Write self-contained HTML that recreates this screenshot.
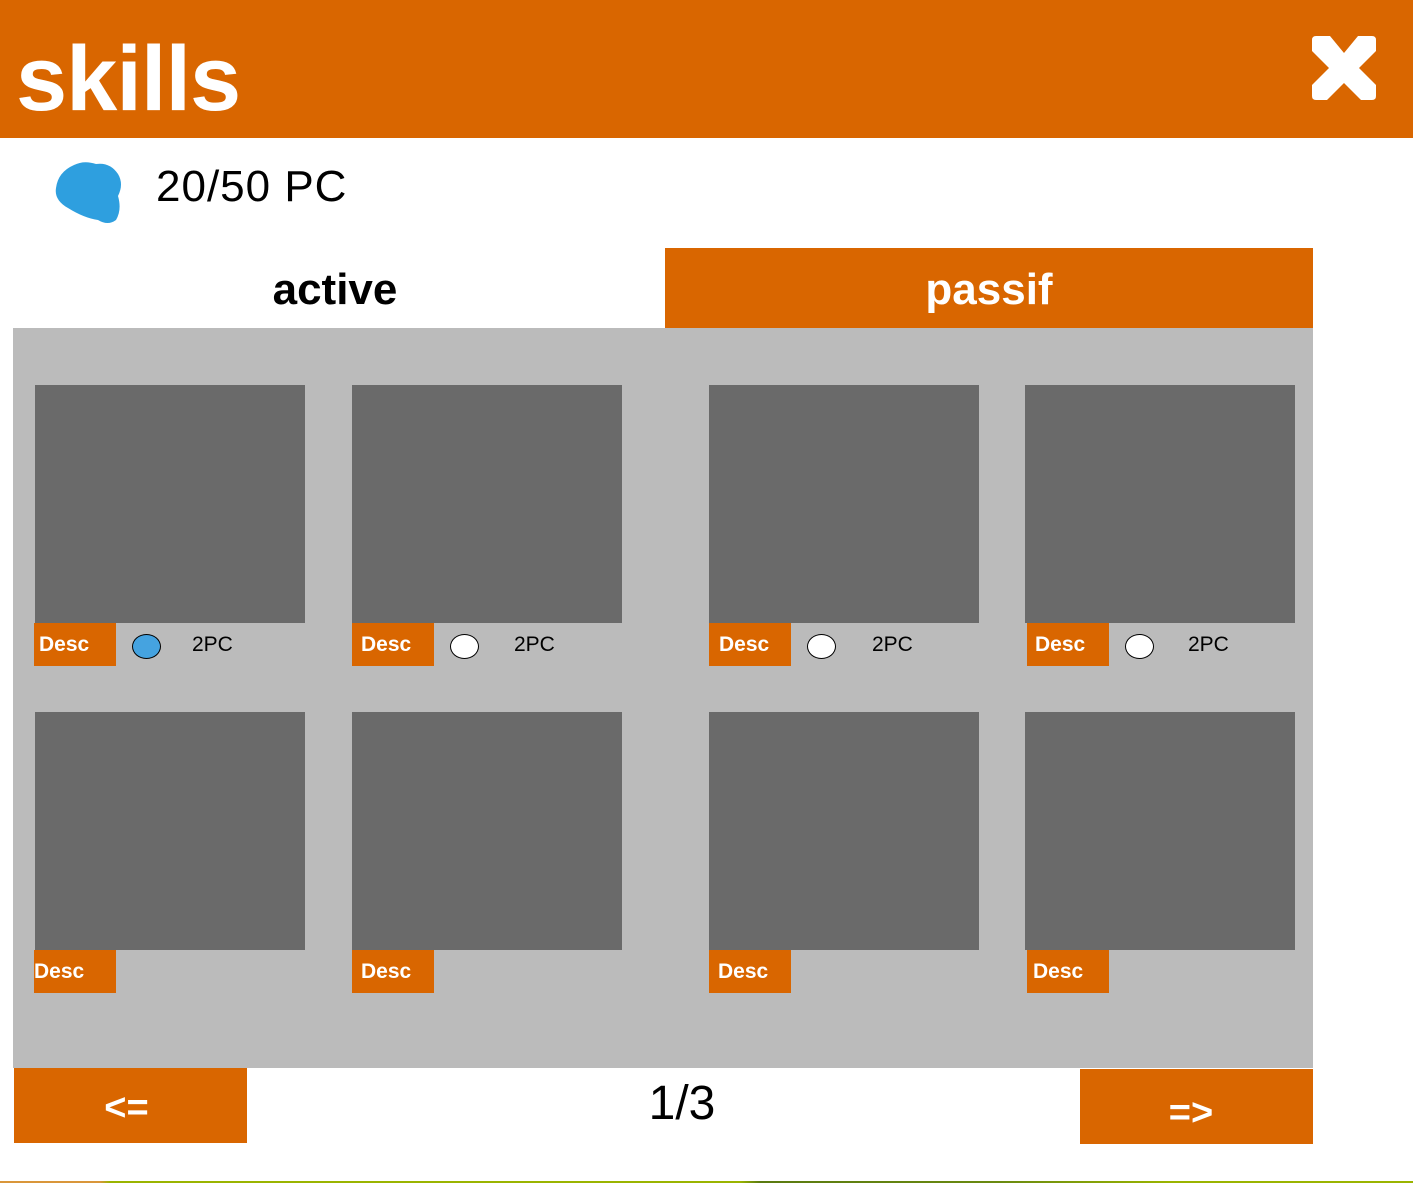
<!DOCTYPE html>
<html><head><style>
*{margin:0;padding:0;box-sizing:border-box}
body{width:1413px;height:1183px;position:relative;background:#fff;font-family:"Liberation Sans",sans-serif;overflow:hidden}
.a{position:absolute}
.o{background:#D96600}
.card{position:absolute;background:#6a6a6a;width:270px;height:238px}
.desc{position:absolute;background:#D96600;width:82px;height:43px;color:#fff;font-weight:bold;font-size:21px;line-height:43px;padding-left:5px}
.rad{position:absolute;width:29px;height:25px;border:1.5px solid #000;border-radius:50%;background:#fff}
.pc{position:absolute;font-size:21px;color:#000;line-height:24px}
</style></head><body>
<div class="a o" style="left:0;top:0;width:1413px;height:138px"></div>
<div class="a" style="left:16px;top:24px;color:#fff;font-weight:bold;font-size:92px;line-height:110px;letter-spacing:-1px">skills</div>
<svg class="a" style="left:1312px;top:36px" width="64" height="64" viewBox="0 0 64 64"><path d="M4 0H18L32 17L46 0H60Q64 0 64 4V15L47 32L64 49V60Q64 64 60 64H49L32 47L15 64H4Q0 64 0 60V49L17 32L0 15V4Q0 0 4 0Z" fill="#fff"/></svg>
<svg class="a" style="left:54px;top:162px" width="68" height="62" viewBox="0 0 68 62"><path d="M20 3Q30 -2 42 2Q56 0 64 12Q70 22 64 34Q68 48 62 58Q54 64 44 58Q30 56 14 46Q0 38 2 26Q4 10 20 3Z" fill="#2E9FDF"/></svg>
<div class="a" style="left:156px;top:161px;font-size:44px;line-height:52px;letter-spacing:1px">20/50 PC</div>
<div class="a" style="left:0;top:262px;width:670px;text-align:center;font-size:44px;font-weight:bold;line-height:56px">active</div>
<div class="a o" style="left:665px;top:248px;width:648px;height:80px"></div>
<div class="a" style="left:665px;top:262px;width:648px;text-align:center;font-size:44px;font-weight:bold;line-height:56px;color:#fff">passif</div>
<div class="a" style="left:13px;top:328px;width:1300px;height:740px;background:#bbb"></div>

<div class="card" style="left:35px;top:385px"></div>
<div class="card" style="left:352px;top:385px"></div>
<div class="card" style="left:709px;top:385px"></div>
<div class="card" style="left:1025px;top:385px"></div>
<div class="card" style="left:35px;top:712px"></div>
<div class="card" style="left:352px;top:712px"></div>
<div class="card" style="left:709px;top:712px"></div>
<div class="card" style="left:1025px;top:712px"></div>

<div class="desc" style="left:34px;top:623px">Desc</div>
<div class="desc" style="left:352px;top:623px;padding-left:9px">Desc</div>
<div class="desc" style="left:709px;top:623px;padding-left:10px">Desc</div>
<div class="desc" style="left:1027px;top:623px;padding-left:8px">Desc</div>
<div class="desc" style="left:34px;top:950px;padding-left:0">Desc</div>
<div class="desc" style="left:352px;top:950px;padding-left:9px">Desc</div>
<div class="desc" style="left:709px;top:950px;padding-left:9px">Desc</div>
<div class="desc" style="left:1027px;top:950px;padding-left:6px">Desc</div>

<div class="rad" style="left:132px;top:634px;background:#45A3E0"></div>
<div class="rad" style="left:450px;top:634px"></div>
<div class="rad" style="left:807px;top:634px"></div>
<div class="rad" style="left:1125px;top:634px"></div>
<div class="pc" style="left:192px;top:633px">2PC</div>
<div class="pc" style="left:514px;top:633px">2PC</div>
<div class="pc" style="left:872px;top:633px">2PC</div>
<div class="pc" style="left:1188px;top:633px">2PC</div>

<div class="a o" style="left:14px;top:1068px;width:233px;height:75px"></div>
<div class="a" style="left:10px;top:1086px;width:233px;text-align:center;color:#fff;font-weight:bold;font-size:38px;line-height:44px">&lt;=</div>
<div class="a" style="left:580px;top:1076px;width:204px;text-align:center;font-size:48px;line-height:56px">1/3</div>
<div class="a o" style="left:1080px;top:1069px;width:233px;height:75px"></div>
<div class="a" style="left:1080px;top:1091px;width:222px;text-align:center;color:#fff;font-weight:bold;font-size:38px;line-height:44px">=&gt;</div>
<div class="a" style="left:0;top:1181px;width:1413px;height:2px;background:linear-gradient(90deg,#d9963a 0,#d9963a 100px,#9ab400 110px,#9ab400 740px,#5a7a10 760px,#6a8a10 1000px,#9ab400 1170px,#9ab400 100%)"></div>
</body></html>
